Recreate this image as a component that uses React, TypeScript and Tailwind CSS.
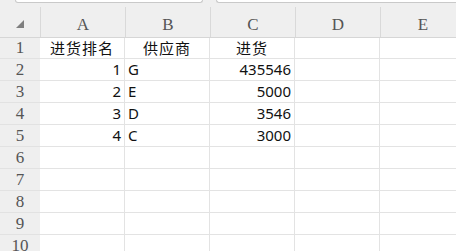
const cols = ["A", "B", "C", "D", "E"];

type Row = { n: number; a?: string; b?: string; c?: string; rh: string };

const rows: Row[] = [
  { n: 1, a: "进货排名", b: "供应商", c: "进货", rh: "h-[21px]" },
  { n: 2, a: "1", b: "G", c: "435546", rh: "h-[22px]" },
  { n: 3, a: "2", b: "E", c: "5000", rh: "h-[22px]" },
  { n: 4, a: "3", b: "D", c: "3546", rh: "h-[22px]" },
  { n: 5, a: "4", b: "C", c: "3000", rh: "h-[22px]" },
  { n: 6, rh: "h-[22px]" },
  { n: 7, rh: "h-[22px]" },
  { n: 8, rh: "h-[22px]" },
  { n: 9, rh: "h-[22px]" },
  { n: 10, rh: "h-[22px]" },
];

const serif = "font-['Liberation_Serif','DejaVu_Serif',serif]";
const cellFont = "font-['Noto_Sans','Noto_Sans_CJK_SC',sans-serif] text-[15px] text-[#111]";

export default function App() {
  return (
    <div className="w-[456px] h-[251px] overflow-hidden bg-[#efefef] flex flex-col">
      {/* top strip */}
      <div className="h-[7px] flex shrink-0">
        <div className="ml-[15px] w-[188px] h-[3px] bg-white border-b border-x border-[#c9c9c9] rounded-b-[4px]" />
        <div className="ml-[13px] flex-1 h-[3px] bg-white border-b border-l border-[#c9c9c9] rounded-bl-[4px]" />
      </div>

      {/* column header */}
      <div className="h-[31px] flex shrink-0 border-b border-[#d6d6d6]">
        <div className="w-[40px] shrink-0 flex items-center justify-center pt-[3px]">
          <svg width="8" height="8" viewBox="0 0 8 8" className="ml-[-1px]">
            <polygon points="8,0 8,8 0,8" fill="#7f7f7f" />
          </svg>
        </div>
        {cols.map((c) => (
          <div
            key={c}
            className={`w-[85px] shrink-0 flex items-center justify-center pt-[6px] border-l border-[#d9d9d9] text-[17px] text-[#555] ${serif}`}
          >
            {c}
          </div>
        ))}
      </div>

      {/* rows */}
      {rows.map((r) => (
        <div key={r.n} className={`flex shrink-0 ${r.rh}`}>
          <div
            className={`w-[40px] shrink-0 flex items-center justify-center border-b border-[#e2e2e2] text-[17px] text-[#555] ${serif}`}
          >
            {r.n}
          </div>
          <div className="flex-1 flex bg-white border-b border-[#e3e3e3]">
            <div
              className={`w-[85px] shrink-0 flex items-center border-r border-[#e3e3e3] ${cellFont} ${
                r.n === 1 ? "justify-center tracking-[1px]" : "justify-end pr-[3px]"
              }`}
            >
              {r.a}
            </div>
            <div
              className={`w-[85px] shrink-0 flex items-center border-r border-[#e3e3e3] ${cellFont} ${
                r.n === 1 ? "justify-center tracking-[1px]" : "justify-start pl-[3px]"
              }`}
            >
              {r.b}
            </div>
            <div
              className={`w-[85px] shrink-0 flex items-center border-r border-[#e3e3e3] ${cellFont} ${
                r.n === 1 ? "justify-center tracking-[1px]" : "justify-end pr-[3px]"
              }`}
            >
              {r.c}
            </div>
            <div className="w-[85px] shrink-0 border-r border-[#e3e3e3]" />
            <div className="flex-1" />
          </div>
        </div>
      ))}
    </div>
  );
}
